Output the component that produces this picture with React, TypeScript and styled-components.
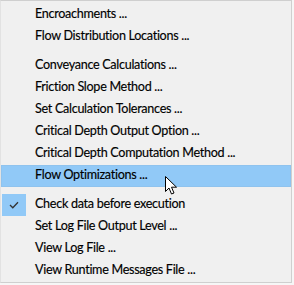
import React from "react";
import styled, { createGlobalStyle } from "styled-components";

const Global = createGlobalStyle`
  html, body { margin: 0; padding: 0; background: #f6f6f6; }
  body { font-family: Lato, "Noto Sans", "Liberation Sans", sans-serif; }
`;

const Menu = styled.div`
  position: relative;
  box-sizing: border-box;
  width: 292px;
  height: 283px;
  background: #f0f0f0;
  border: 1px solid #cfcfcf;
  border-left-color: #e2e2e2;
  padding: 3px 0 2px 0;
  display: flex;
  flex-direction: column;
`;

const Row = styled.div<{ $active?: boolean }>`
  display: flex;
  align-items: center;
  height: 22px;
  background: ${(p) => (p.$active ? "#91c9f7" : "transparent")};
  border: 1px solid ${(p) => (p.$active ? "#8fc3ee" : "transparent")};
  box-sizing: border-box;
`;

const CheckCell = styled.div<{ $checked?: boolean }>`
  width: 24px;
  height: 22px;
  margin-right: 9px;
  display: flex;
  align-items: center;
  justify-content: center;
  background: ${(p) => (p.$checked ? "#91c9f7" : "transparent")};
`;

const Label = styled.span`
  font-size: 12.6px;
  line-height: 14px;
  color: #000;
  white-space: nowrap;
  letter-spacing: -0.3px;
  -webkit-text-stroke: 0.15px #000;
  margin-top: -2px;
`;

const Separator = styled.div`
  height: 1px;
  background: #d7d7d7;
  margin: 3px 1px 4px 31px;
`;

const Cursor = styled.svg`
  position: absolute;
  left: 164px;
  top: 175px;
`;

type Item = { label: string; active?: boolean; checked?: boolean } | "sep";

const items: Item[] = [
  { label: "Encroachments ..." },
  { label: "Flow Distribution Locations ..." },
  "sep",
  { label: "Conveyance Calculations ..." },
  { label: "Friction Slope Method ..." },
  { label: "Set Calculation Tolerances ..." },
  { label: "Critical Depth Output Option ..." },
  { label: "Critical Depth Computation Method ..." },
  { label: "Flow Optimizations ...", active: true },
  "sep",
  { label: "Check data before execution", checked: true },
  { label: "Set Log File Output Level ..." },
  { label: "View Log File ..." },
  { label: "View Runtime Messages File ..." },
];

export default function App() {
  return (
    <>
      <Global />
      <Menu>
        {items.map((it, i) =>
          it === "sep" ? (
            <Separator key={i} />
          ) : (
            <Row key={i} $active={it.active}>
              <CheckCell $checked={it.checked}>
                {it.checked && (
                  <svg width="10" height="8" viewBox="0 0 10 8">
                    <path d="M1 4 L3.8 6.8 L9 1.2" fill="none" stroke="#333" strokeWidth="1.3" />
                  </svg>
                )}
              </CheckCell>
              <Label>{it.label}</Label>
            </Row>
          )
        )}
        <Cursor width="13" height="20" viewBox="0 0 13 20">
          <path
            d="M0.5 0.5 L0.5 15.5 L4 12 L6.5 18 L9 17 L6.5 11.2 L11.5 11.2 Z"
            fill="#ffffff"
            stroke="#000"
            strokeWidth="1"
            strokeLinejoin="round"
          />
        </Cursor>
      </Menu>
    </>
  );
}
